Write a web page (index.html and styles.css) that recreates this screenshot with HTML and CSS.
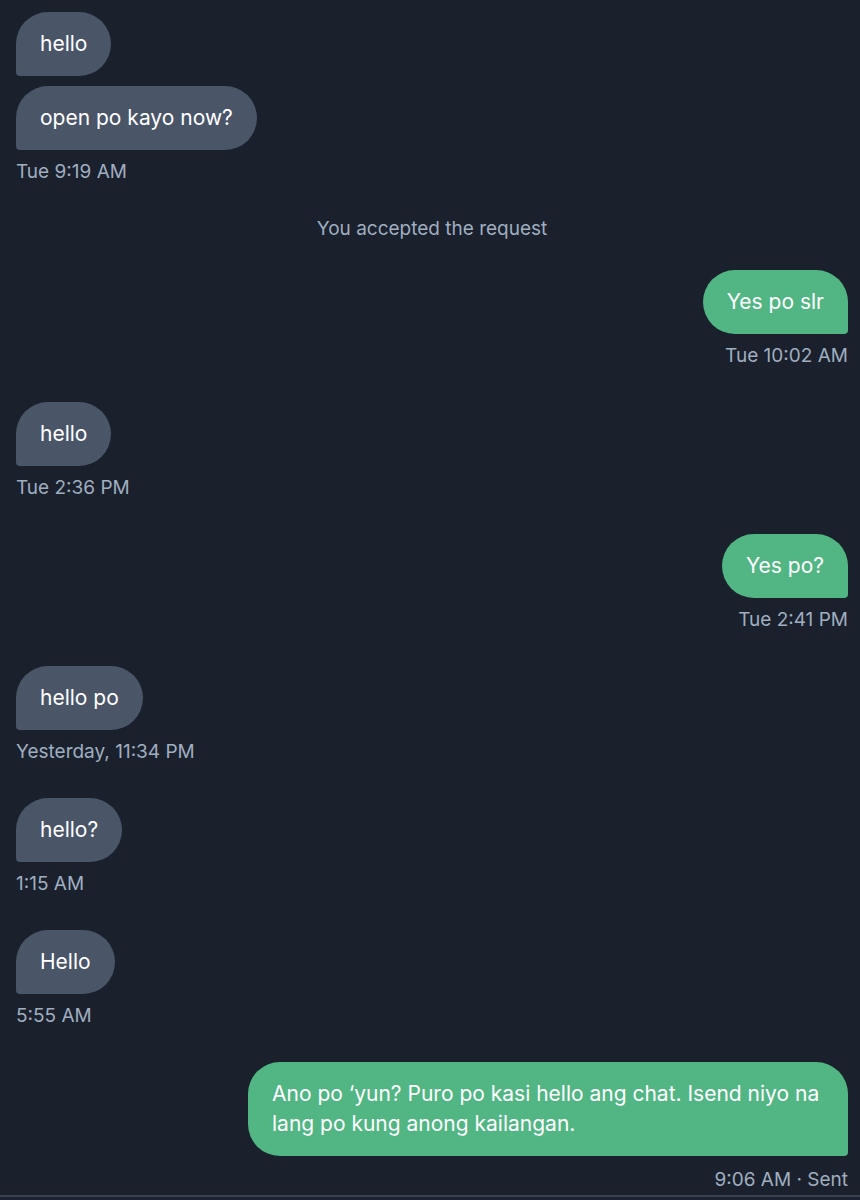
FILE: index.html
```html
<!DOCTYPE html>
<html lang="en">
<head>
    <meta charset="UTF-8">
    <meta name="viewport" content="width=device-width, initial-scale=1.0">
    <title>Chat</title>
    <link rel="stylesheet" href="styles.css">
</head>
<body>
    <div class="thread">
        <div class="group in">
            <div class="bubble">hello</div>
            <div class="bubble">open po kayo now?</div>
            <div class="time">Tue 9:19 AM</div>
        </div>

        <div class="notice">You accepted the request</div>

        <div class="group out">
            <div class="bubble">Yes po slr</div>
            <div class="time">Tue 10:02 AM</div>
        </div>

        <div class="group in">
            <div class="bubble">hello</div>
            <div class="time">Tue 2:36 PM</div>
        </div>

        <div class="group out">
            <div class="bubble">Yes po?</div>
            <div class="time">Tue 2:41 PM</div>
        </div>

        <div class="group in">
            <div class="bubble">hello po</div>
            <div class="time">Yesterday, 11:34 PM</div>
        </div>

        <div class="group in">
            <div class="bubble">hello?</div>
            <div class="time">1:15 AM</div>
        </div>

        <div class="group in">
            <div class="bubble">Hello</div>
            <div class="time">5:55 AM</div>
        </div>

        <div class="group out last">
            <div class="bubble">Ano po ‘yun? Puro po kasi hello ang chat. Isend niyo na lang po kung anong kailangan.</div>
            <div class="time">9:06 AM · Sent</div>
        </div>
    </div>
    <div class="composer"></div>
</body>
</html>
```

FILE: styles.css
```css
body {
    font-family: Inter, "Noto Sans", sans-serif;
    background-color: #1a202c;
    color: #ffffff;
    margin: 0;
    padding: 0;
}
.thread {
    padding: 12px 12px 0 16px;
}
.group {
    display: flex;
    flex-direction: column;
    gap: 10px;
    margin-bottom: 33px;
}
.group.in {
    align-items: flex-start;
}
.group.out {
    align-items: flex-end;
}
.group.last {
    margin-bottom: 0;
}
.bubble {
    font-size: 21px;
    line-height: 30px;
    padding: 17px 24px;
    border-radius: 32px;
    max-width: 552px;
}
.in .bubble {
    background-color: #4a5568;
    border-bottom-left-radius: 4px;
}
.out .bubble {
    background-color: #51b683;
    border-bottom-right-radius: 4px;
}
.time {
    font-size: 19px;
    line-height: 26px;
    color: #a0aec0;
    margin-top: -1px;
}
.last .time {
    margin-top: 1px;
}
.notice {
    text-align: center;
    font-size: 19px;
    line-height: 26px;
    color: #a0aec0;
    margin: -2px 0 28px;
}
.composer {
    margin-top: 2px;
    border-top: 2px solid #3a4352;
    height: 10px;
    background-color: #1c2230;
}
```
